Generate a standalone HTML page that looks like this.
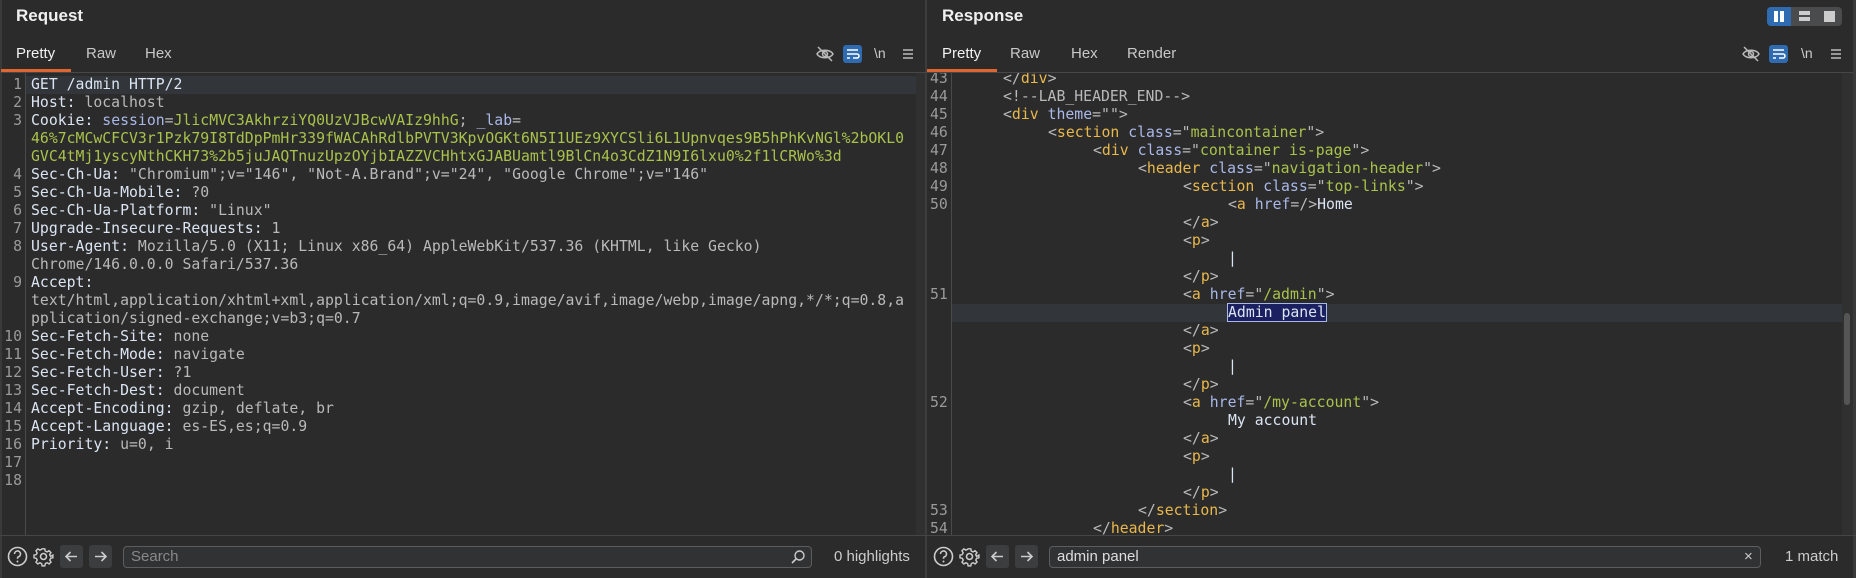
<!DOCTYPE html>
<html><head><meta charset="utf-8"><style>
*{margin:0;padding:0;box-sizing:border-box}
body{width:1856px;height:578px;background:#2b2b2b;overflow:hidden;position:relative;font-family:"Liberation Sans","DejaVu Sans",sans-serif;color:#d4d4d4}
.abs{position:absolute}
.title{font-weight:bold;font-size:17px;color:#f0f0f0;top:6px}
.tab{font-size:15px;color:#c8c8c8;top:45px}
.tab.on{color:#f2f2f2}
.ul{background:#e06631;height:3px;top:69px}
.sep{background:#444;height:1px}
.code{font-family:"DejaVu Sans Mono","Liberation Mono",monospace;font-size:14.8px;line-height:18px;white-space:pre}
.ln{color:#9a9a9a}
.k{color:#dbe4f2}.v{color:#b9b9b9}.g{color:#a8c24b}.s{color:#a9b8e8}
.t{color:#e9b84c}.p{color:#b9b9b9}.a{color:#a9b8e8}.av{color:#a8c24b}
.box{border:1px solid #5d5d5d;border-radius:4px;background:#313234;height:22px;top:546px}
.btn{background:#3c3d3f;border-radius:3px;width:23px;height:23px;top:545px}
svg{position:absolute}
</style></head><body>
<div class="abs" style="left:0;top:0;width:2px;height:578px;background:#3a3a3a"></div>
<div class="abs" style="left:916px;top:73px;width:10px;height:462px;background:#303030"></div>
<div class="abs" style="left:925px;top:0;width:2px;height:578px;background:#3d3d3d"></div>

<div class="abs title" style="left:16px">Request</div>
<div class="abs title" style="left:942px">Response</div>

<div class="abs tab on" style="left:16px">Pretty</div>
<div class="abs tab" style="left:86px">Raw</div>
<div class="abs tab" style="left:145px">Hex</div>
<div class="abs ul" style="left:1px;width:70px"></div>
<div class="abs tab on" style="left:942px">Pretty</div>
<div class="abs tab" style="left:1010px">Raw</div>
<div class="abs tab" style="left:1071px">Hex</div>
<div class="abs tab" style="left:1127px">Render</div>
<div class="abs ul" style="left:927px;width:70px"></div>
<div class="abs sep" style="left:0;top:72px;width:1856px;background:#474747"></div>

<svg style="left:815px;top:45px" width="20" height="18" viewBox="0 0 20 18"><path d="M2 9c3-5 13-5 16 0c-3 5-13 5-16 0z" fill="none" stroke="#bbb" stroke-width="1.5"/><circle cx="10" cy="9" r="2.5" fill="none" stroke="#bbb" stroke-width="1.5"/><path d="M3 2l14 14" stroke="#bbb" stroke-width="1.5"/></svg>
<div class="abs" style="left:843px;top:45px;width:19px;height:18px;background:#2e6bb0;border-radius:3px"></div>
<svg style="left:843px;top:45px" width="19" height="18" viewBox="0 0 19 18"><path d="M4 5h11M4 9h10a2 2 0 0 1 0 4h-4M4 13h3" fill="none" stroke="#fff" stroke-width="1.5"/></svg>
<div class="abs" style="left:874px;top:45px;font-size:14px;color:#ccc">\n</div>
<svg style="left:901px;top:47px" width="14" height="14" viewBox="0 0 14 14"><path d="M2 3h10M2 7h10M2 11h10" stroke="#bbb" stroke-width="1.5"/></svg>

<svg style="left:1741px;top:45px" width="20" height="18" viewBox="0 0 20 18"><path d="M2 9c3-5 13-5 16 0c-3 5-13 5-16 0z" fill="none" stroke="#bbb" stroke-width="1.5"/><circle cx="10" cy="9" r="2.5" fill="none" stroke="#bbb" stroke-width="1.5"/><path d="M3 2l14 14" stroke="#bbb" stroke-width="1.5"/></svg>
<div class="abs" style="left:1769px;top:45px;width:19px;height:18px;background:#2e6bb0;border-radius:3px"></div>
<svg style="left:1769px;top:45px" width="19" height="18" viewBox="0 0 19 18"><path d="M4 5h11M4 9h10a2 2 0 0 1 0 4h-4M4 13h3" fill="none" stroke="#fff" stroke-width="1.5"/></svg>
<div class="abs" style="left:1801px;top:45px;font-size:14px;color:#ccc">\n</div>
<svg style="left:1829px;top:47px" width="14" height="14" viewBox="0 0 14 14"><path d="M2 3h10M2 7h10M2 11h10" stroke="#bbb" stroke-width="1.5"/></svg>

<div class="abs" style="left:1767px;top:7px;width:75px;height:19px;background:#4a4b4d;border-radius:4px;overflow:hidden"><div style="width:24px;height:19px;background:#2e6bb0"></div></div>
<div class="abs" style="left:1774px;top:11px;width:4px;height:11px;background:#fff"></div>
<div class="abs" style="left:1780px;top:11px;width:4px;height:11px;background:#fff"></div>
<div class="abs" style="left:1799px;top:11px;width:11px;height:4px;background:#ccc"></div>
<div class="abs" style="left:1799px;top:17px;width:11px;height:4px;background:#ccc"></div>
<div class="abs" style="left:1824px;top:11px;width:11px;height:11px;background:#ccc"></div>

<div class="abs" style="left:26px;top:76px;width:890px;height:18px;background:#32363a"></div>
<div class="abs" style="left:25px;top:73px;width:1px;height:462px;background:#4a4a4a"></div>
<div class="abs code ln" style="left:0;top:76px;width:22px;text-align:right">1
2
3


4
5
6
7
8

9


10
11
12
13
14
15
16
17
18</div>
<div class="abs code" style="left:31px;top:76px;width:885px;overflow:hidden"><span class="k">GET /admin HTTP/2</span>
<span class="k">Host: </span><span class="v">localhost</span>
<span class="k">Cookie: </span><span class="s">session</span><span class="v">=</span><span class="g">JlicMVC3AkhrziYQ0UzVJBcwVAIz9hhG</span><span class="v">; </span><span class="s">_lab</span><span class="v">=</span>
<span class="g">46%7cMCwCFCV3r1Pzk79I8TdDpPmHr339fWACAhRdlbPVTV3KpvOGKt6N5I1UEz9XYCSli6L1Upnvqes9B5hPhKvNGl%2bOKL0</span>
<span class="g">GVC4tMj1yscyNthCKH73%2b5juJAQTnuzUpzOYjbIAZZVCHhtxGJABUamtl9BlCn4o3CdZ1N9I6lxu0%2f1lCRWo%3d</span>
<span class="k">Sec-Ch-Ua: </span><span class="v">"Chromium";v="146", "Not-A.Brand";v="24", "Google Chrome";v="146"</span>
<span class="k">Sec-Ch-Ua-Mobile: </span><span class="v">?0</span>
<span class="k">Sec-Ch-Ua-Platform: </span><span class="v">"Linux"</span>
<span class="k">Upgrade-Insecure-Requests: </span><span class="v">1</span>
<span class="k">User-Agent: </span><span class="v">Mozilla/5.0 (X11; Linux x86_64) AppleWebKit/537.36 (KHTML, like Gecko)</span>
<span class="v">Chrome/146.0.0.0 Safari/537.36</span>
<span class="k">Accept: </span>
<span class="v">text/html,application/xhtml+xml,application/xml;q=0.9,image/avif,image/webp,image/apng,*/*;q=0.8,a</span>
<span class="v">pplication/signed-exchange;v=b3;q=0.7</span>
<span class="k">Sec-Fetch-Site: </span><span class="v">none</span>
<span class="k">Sec-Fetch-Mode: </span><span class="v">navigate</span>
<span class="k">Sec-Fetch-User: </span><span class="v">?1</span>
<span class="k">Sec-Fetch-Dest: </span><span class="v">document</span>
<span class="k">Accept-Encoding: </span><span class="v">gzip, deflate, br</span>
<span class="k">Accept-Language: </span><span class="v">es-ES,es;q=0.9</span>
<span class="k">Priority: </span><span class="v">u=0, i</span>
</div>

<div class="abs" style="left:927px;top:73px;width:915px;height:462px;overflow:hidden">
 <div class="abs" style="left:25px;top:231px;width:890px;height:18px;background:#32363a"></div>
 <div class="abs" style="left:24px;top:0;width:1px;height:462px;background:#4a4a4a"></div>
 <div class="abs code ln" style="left:3px;top:-3px">43
44
45
46
47
48
49
50




51





52





53
54</div>
 <div class="abs code" style="left:76px;top:-3px"><span class="p">&lt;/</span><span class="t">div</span><span class="p">&gt;</span>
<span class="p">&lt;!--LAB_HEADER_END--&gt;</span>
<span class="p">&lt;</span><span class="t">div</span> <span class="a">theme</span><span class="p">=""&gt;</span>
<span style="padding-left:45px"></span><span class="p">&lt;</span><span class="t">section</span> <span class="a">class</span><span class="p">="</span><span class="av">maincontainer</span><span class="p">"&gt;</span>
<span style="padding-left:90px"></span><span class="p">&lt;</span><span class="t">div</span> <span class="a">class</span><span class="p">="</span><span class="av">container is-page</span><span class="p">"&gt;</span>
<span style="padding-left:135px"></span><span class="p">&lt;</span><span class="t">header</span> <span class="a">class</span><span class="p">="</span><span class="av">navigation-header</span><span class="p">"&gt;</span>
<span style="padding-left:180px"></span><span class="p">&lt;</span><span class="t">section</span> <span class="a">class</span><span class="p">="</span><span class="av">top-links</span><span class="p">"&gt;</span>
<span style="padding-left:225px"></span><span class="p">&lt;</span><span class="t">a</span> <span class="a">href</span><span class="p">=/&gt;</span><span class="k">Home</span>
<span style="padding-left:180px"></span><span class="p">&lt;/</span><span class="t">a</span><span class="p">&gt;</span>
<span style="padding-left:180px"></span><span class="p">&lt;</span><span class="t">p</span><span class="p">&gt;</span>
<span style="padding-left:225px"></span><span class="k">|</span>
<span style="padding-left:180px"></span><span class="p">&lt;/</span><span class="t">p</span><span class="p">&gt;</span>
<span style="padding-left:180px"></span><span class="p">&lt;</span><span class="t">a</span> <span class="a">href</span><span class="p">="</span><span class="av">/admin</span><span class="p">"&gt;</span>
<span style="padding-left:225px"></span><span class="k" style="background:#1b2160;outline:1px solid #a9b8e8">Admin panel</span>
<span style="padding-left:180px"></span><span class="p">&lt;/</span><span class="t">a</span><span class="p">&gt;</span>
<span style="padding-left:180px"></span><span class="p">&lt;</span><span class="t">p</span><span class="p">&gt;</span>
<span style="padding-left:225px"></span><span class="k">|</span>
<span style="padding-left:180px"></span><span class="p">&lt;/</span><span class="t">p</span><span class="p">&gt;</span>
<span style="padding-left:180px"></span><span class="p">&lt;</span><span class="t">a</span> <span class="a">href</span><span class="p">="</span><span class="av">/my-account</span><span class="p">"&gt;</span>
<span style="padding-left:225px"></span><span class="k">My account</span>
<span style="padding-left:180px"></span><span class="p">&lt;/</span><span class="t">a</span><span class="p">&gt;</span>
<span style="padding-left:180px"></span><span class="p">&lt;</span><span class="t">p</span><span class="p">&gt;</span>
<span style="padding-left:225px"></span><span class="k">|</span>
<span style="padding-left:180px"></span><span class="p">&lt;/</span><span class="t">p</span><span class="p">&gt;</span>
<span style="padding-left:135px"></span><span class="p">&lt;/</span><span class="t">section</span><span class="p">&gt;</span>
<span style="padding-left:90px"></span><span class="p">&lt;/</span><span class="t">header</span><span class="p">&gt;</span></div>
</div>
<div class="abs" style="left:1842px;top:73px;width:11px;height:462px;background:#303030"></div>
<div class="abs" style="left:1844px;top:313px;width:6px;height:92px;background:#555;border-radius:3px"></div>
<div class="abs" style="left:1853px;top:0;width:3px;height:578px;background:#3a3a3a"></div>

<div class="abs sep" style="left:0;top:535px;width:1856px;background:#454545"></div>

<svg style="left:7px;top:546px" width="21" height="21" viewBox="0 0 21 21"><circle cx="10.5" cy="10.5" r="9" fill="none" stroke="#ccc" stroke-width="1.6"/><path d="M7.5 8a3 3 0 1 1 4 2.8c-1 .4-1 1-1 2" fill="none" stroke="#ccc" stroke-width="1.6"/><circle cx="10.5" cy="15.5" r="1" fill="#ccc"/></svg>
<svg style="left:33px;top:546px" width="21" height="21" viewBox="0 0 21 21"><circle cx="10.5" cy="10.5" r="3" fill="none" stroke="#ccc" stroke-width="1.6"/><path d="M9 2h3l.5 2.5 2 1 2.2-1.4 2.1 2.1-1.4 2.2 1 2L21 9v3l-2.5.5-1 2 1.4 2.2-2.1 2.1-2.2-1.4-2 1L12 21H9l-.5-2.5-2-1-2.2 1.4-2.1-2.1 1.4-2.2-1-2L0 12V9l2.5-.5 1-2L2.2 4.2 4.3 2.1l2.2 1.4 2-1z" transform="translate(1 1) scale(.9)" fill="none" stroke="#ccc" stroke-width="1.6"/></svg>
<div class="abs btn" style="left:60px"></div>
<svg style="left:60px;top:545px" width="23" height="23" viewBox="0 0 23 23"><path d="M17 11.5H6M10.5 7l-4.5 4.5 4.5 4.5" fill="none" stroke="#ccc" stroke-width="1.6"/></svg>
<div class="abs btn" style="left:89px"></div>
<svg style="left:89px;top:545px" width="23" height="23" viewBox="0 0 23 23"><path d="M6 11.5h11M12.5 7l4.5 4.5-4.5 4.5" fill="none" stroke="#ccc" stroke-width="1.6"/></svg>
<div class="abs box" style="left:123px;width:689px"></div>
<div class="abs" style="left:131px;top:548px;font-size:15px;color:#888">Search</div>
<svg style="left:790px;top:549px" width="16" height="16" viewBox="0 0 16 16"><circle cx="9.5" cy="6.5" r="4.5" fill="none" stroke="#ccc" stroke-width="1.4"/><path d="M6 10l-4 4" stroke="#ccc" stroke-width="1.6"/></svg>
<div class="abs" style="left:834px;top:548px;font-size:15px;color:#ccc">0 highlights</div>

<svg style="left:933px;top:546px" width="21" height="21" viewBox="0 0 21 21"><circle cx="10.5" cy="10.5" r="9" fill="none" stroke="#ccc" stroke-width="1.6"/><path d="M7.5 8a3 3 0 1 1 4 2.8c-1 .4-1 1-1 2" fill="none" stroke="#ccc" stroke-width="1.6"/><circle cx="10.5" cy="15.5" r="1" fill="#ccc"/></svg>
<svg style="left:959px;top:546px" width="21" height="21" viewBox="0 0 21 21"><circle cx="10.5" cy="10.5" r="3" fill="none" stroke="#ccc" stroke-width="1.6"/><path d="M9 2h3l.5 2.5 2 1 2.2-1.4 2.1 2.1-1.4 2.2 1 2L21 9v3l-2.5.5-1 2 1.4 2.2-2.1 2.1-2.2-1.4-2 1L12 21H9l-.5-2.5-2-1-2.2 1.4-2.1-2.1 1.4-2.2-1-2L0 12V9l2.5-.5 1-2L2.2 4.2 4.3 2.1l2.2 1.4 2-1z" transform="translate(1 1) scale(.9)" fill="none" stroke="#ccc" stroke-width="1.6"/></svg>
<div class="abs btn" style="left:986px"></div>
<svg style="left:986px;top:545px" width="23" height="23" viewBox="0 0 23 23"><path d="M17 11.5H6M10.5 7l-4.5 4.5 4.5 4.5" fill="none" stroke="#ccc" stroke-width="1.6"/></svg>
<div class="abs btn" style="left:1015px"></div>
<svg style="left:1015px;top:545px" width="23" height="23" viewBox="0 0 23 23"><path d="M6 11.5h11M12.5 7l4.5 4.5-4.5 4.5" fill="none" stroke="#ccc" stroke-width="1.6"/></svg>
<div class="abs box" style="left:1049px;width:712px"></div>
<div class="abs" style="left:1057px;top:548px;font-size:15px;color:#ddd">admin panel</div>
<div class="abs" style="left:1744px;top:548px;font-size:15px;color:#ccc">×</div>
<div class="abs" style="left:1785px;top:548px;font-size:15px;color:#ccc">1 match</div>
</body></html>
